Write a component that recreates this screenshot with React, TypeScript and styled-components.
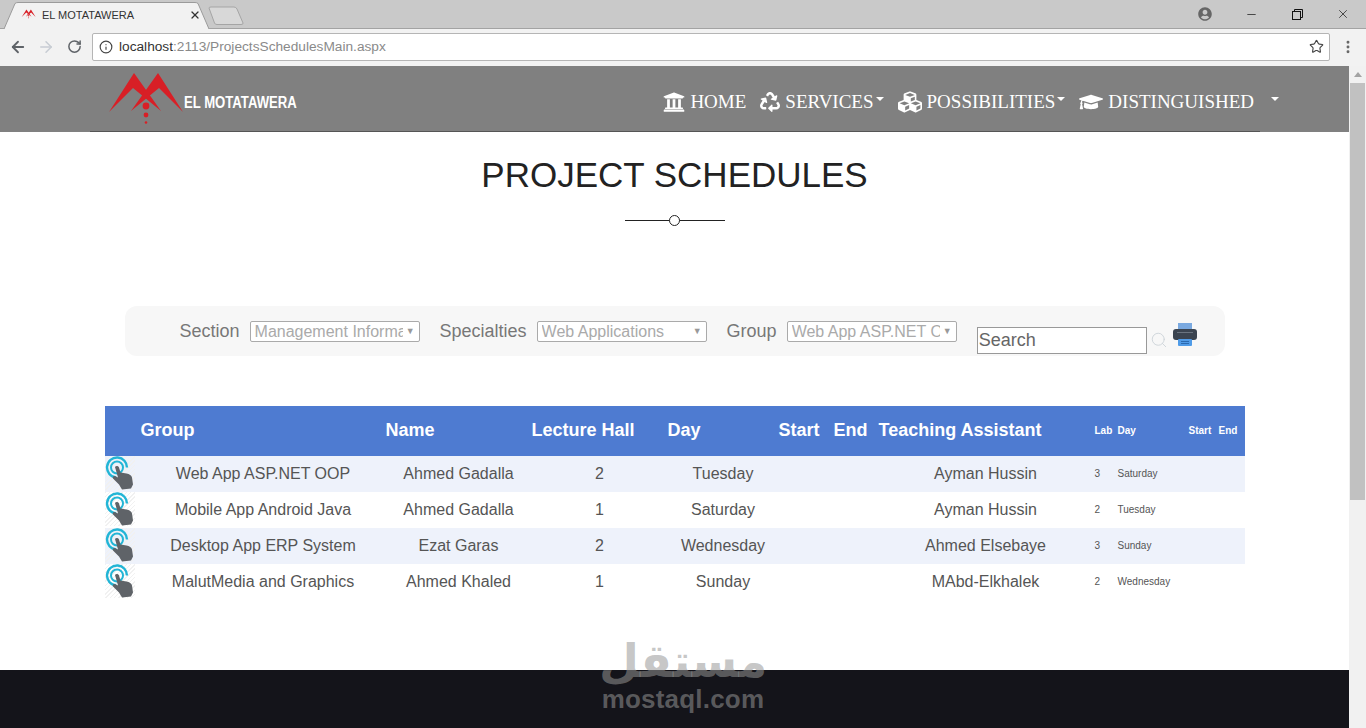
import type { FC } from "react";
import styled, { createGlobalStyle } from "styled-components";
import {
  ArrowLeft,
  ArrowRight,
  EllipsisVertical,
  Info,
  Minus,
  RotateCw,
  Search,
  Star,
  X,
} from "lucide-react";
import { FaCubes, FaGraduationCap, FaRecycle, FaUniversity, FaUserCircle } from "react-icons/fa";

const rows = [
  { group: "Web App ASP.NET OOP", name: "Ahmed Gadalla", hall: "2", day: "Tuesday", ta: "Ayman Hussin", lab: "3", labDay: "Saturday" },
  { group: "Mobile App Android Java", name: "Ahmed Gadalla", hall: "1", day: "Saturday", ta: "Ayman Hussin", lab: "2", labDay: "Tuesday" },
  { group: "Desktop App ERP System", name: "Ezat Garas", hall: "2", day: "Wednesday", ta: "Ahmed Elsebaye", lab: "3", labDay: "Sunday" },
  { group: "MalutMedia and Graphics", name: "Ahmed Khaled", hall: "1", day: "Sunday", ta: "MAbd-Elkhalek", lab: "2", labDay: "Wednesday" },
];

const columns = [36, 245, 146, 136, 111, 55, 45, 216, 23, 71, 30, 26];

const LogoMark: FC<{ size: number }> = ({ size }) => (
  <svg width={size} height={(size * 56) / 80} viewBox="105 70 80 56">
    <polygon points="109,112 134,73 161,111 133,88" fill="#d81f26" />
    <polygon points="183,112 158,73 131,111 159,88" fill="#d81f26" />
    <circle cx="146" cy="106" r="3.4" fill="#d81f26" />
    <circle cx="146" cy="115" r="2.4" fill="#d81f26" />
    <circle cx="146" cy="122.5" r="1.3" fill="#d81f26" />
  </svg>
);

const TapIcon: FC = () => (
  <svg width="30" height="34" viewBox="0 0 30 34">
    <circle cx="12" cy="11.500" r="10" fill="none" stroke="#22b5d6" strokeWidth="2.4" strokeDasharray="46 17" transform="rotate(95 12 11.500)" />
    <circle cx="12" cy="11.500" r="6" fill="none" stroke="#22b5d6" strokeWidth="2" />
    <path
      d="M10 11c1-1.500 3.500-1 4 .5l1.500 5 6 1c3 .5 5 2 5.500 4l1 7-2 4-9 1-3-5-6-6c-1-2 1-3.500 3-2l2 1z"
      fill="#5f6368"
    />
  </svg>
);

const PrinterIcon: FC = () => (
  <svg width="24" height="23" viewBox="0 0 24 23">
    <rect x="5" y="0" width="14" height="7" fill="#7aa9e0" />
    <rect x="0" y="6" width="24" height="11" rx="3" fill="#3b4450" />
    <rect x="4" y="9" width="16" height="1" fill="#6b7480" />
    <rect x="5" y="16" width="14" height="7" rx="1" fill="#4f9be8" />
    <rect x="8" y="18" width="8" height="1" fill="#2a69b0" />
    <rect x="8" y="20" width="8" height="1" fill="#2a69b0" />
  </svg>
);

const App: FC = () => (
  <>
    <GlobalStyle />
    <Window>
      <TabStrip>
        <ActiveTab>
          <TabShape width="205" height="27" viewBox="0 0 205 27">
            <path d="M0 27 L11 1.500 Q12 .5 14 .5 L191 .5 Q193 .5 194 1.500 L205 27" fill="#f2f2f2" stroke="#9b9b9b" />
          </TabShape>
          <Favicon>
            <LogoMark size={15} />
          </Favicon>
          <TabTitle>EL MOTATAWERA</TabTitle>
          <TabClose>
            <X size={12} strokeWidth={2.4} />
          </TabClose>
        </ActiveTab>
        <NewTab width="36" height="20" viewBox="0 0 36 20">
          <path d="M1 2 Q1 1 3 1 L26 1 Q28 1 29 3 L35 17 Q35.500 18.500 33 18.500 L9 18.500 Q7 18.500 6.500 17z" fill="#d8d8d8" stroke="#a5a5a5" />
        </NewTab>
        <WindowControls>
          <ProfileButton>
            <FaUserCircle size={14} />
          </ProfileButton>
          <WindowButton>
            <Minus size={13} strokeWidth={1.3} />
          </WindowButton>
          <WindowButton>
            <svg width="11" height="11" viewBox="0 0 11 11" fill="none" stroke="#111" strokeWidth="1">
              <rect x=".5" y="2.500" width="8" height="8" />
              <path d="M2.500 2.500V.5h8v8H8.500" />
            </svg>
          </WindowButton>
          <WindowButton>
            <X size={14} strokeWidth={1.2} />
          </WindowButton>
        </WindowControls>
      </TabStrip>

      <Toolbar>
        <ToolButton>
          <ArrowLeft size={18} strokeWidth={2.4} color="#5f6368" />
        </ToolButton>
        <ToolButton>
          <ArrowRight size={18} strokeWidth={2} color="#c7ccd3" />
        </ToolButton>
        <ToolButton>
          <RotateCw size={15} strokeWidth={2.4} color="#5f6368" />
        </ToolButton>
        <Omnibox>
          <Info size={14} strokeWidth={2} color="#444" />
          <UrlHost>localhost</UrlHost>
          <UrlPath>:2113/ProjectsSchedulesMain.aspx</UrlPath>
          <OmniStar>
            <Star size={15} strokeWidth={1.8} color="#444" />
          </OmniStar>
        </Omnibox>
        <MenuButton>
          <EllipsisVertical size={16} strokeWidth={2.4} color="#666" />
        </MenuButton>
      </Toolbar>

      <Viewport>
        <Page>
          <Nav>
            <NavRow>
              <Brand>
                <LogoMark size={80} />
                <BrandName>EL MOTATAWERA</BrandName>
              </Brand>
              <NavLinks>
                <NavLink>
                  <FaUniversity size={22} />
                  HOME
                </NavLink>
                <NavLink>
                  <FaRecycle size={20} />
                  SERVICES
                  <Caret />
                </NavLink>
                <NavLink>
                  <FaCubes size={24} />
                  POSSIBILITIES
                  <Caret />
                </NavLink>
                <NavLink>
                  <FaGraduationCap size={24} />
                  DISTINGUISHED
                  <WideCaret />
                </NavLink>
              </NavLinks>
            </NavRow>
            <NavRule />
          </Nav>

          <Main>
            <Title>PROJECT SCHEDULES</Title>
            <Divider>
              <DividerDot />
            </Divider>

            <FilterBar>
              <FilterLabel>Section</FilterLabel>
              <SelectBox>
                <SelectText>Management Information</SelectText>
                <SelectArrow>▼</SelectArrow>
              </SelectBox>
              <FilterLabel>Specialties</FilterLabel>
              <SelectBox>
                <SelectText>Web Applications</SelectText>
                <SelectArrow>▼</SelectArrow>
              </SelectBox>
              <FilterLabel>Group</FilterLabel>
              <SelectBox>
                <SelectText>Web App ASP.NET OOP</SelectText>
                <SelectArrow>▼</SelectArrow>
              </SelectBox>
              <SearchInput readOnly value="Search" />
              <SearchButton>
                <Search size={18} strokeWidth={1.2} color="#ccd3d8" />
              </SearchButton>
              <PrintButton>
                <PrinterIcon />
              </PrintButton>
            </FilterBar>

            <ScheduleTable>
              <colgroup>
                {columns.map((width, index) => (
                  <col key={index} style={{ width }} />
                ))}
              </colgroup>
              <thead>
                <tr>
                  <HeadCell />
                  <HeadCell>Group</HeadCell>
                  <HeadCell>Name</HeadCell>
                  <HeadCell>Lecture Hall</HeadCell>
                  <HeadCell>Day</HeadCell>
                  <HeadCell>Start</HeadCell>
                  <HeadCell>End</HeadCell>
                  <HeadCell>Teaching Assistant</HeadCell>
                  <SmallHeadCell>Lab</SmallHeadCell>
                  <SmallHeadCell>Day</SmallHeadCell>
                  <SmallHeadCell>Start</SmallHeadCell>
                  <SmallHeadCell>End</SmallHeadCell>
                </tr>
              </thead>
              <tbody>
                {rows.map((row) => (
                  <Row key={row.group}>
                    <IconCell>
                      <TapIcon />
                    </IconCell>
                    <Cell>{row.group}</Cell>
                    <Cell>{row.name}</Cell>
                    <Cell>{row.hall}</Cell>
                    <Cell>{row.day}</Cell>
                    <Cell />
                    <Cell />
                    <AssistantCell>{row.ta}</AssistantCell>
                    <SmallCell>{row.lab}</SmallCell>
                    <SmallCell>{row.labDay}</SmallCell>
                    <SmallCell />
                    <SmallCell />
                  </Row>
                ))}
              </tbody>
            </ScheduleTable>
          </Main>

          <Footer />

          <Watermark>
            <WatermarkArabic>مستقل</WatermarkArabic>
            <WatermarkLatin>mostaql.com</WatermarkLatin>
          </Watermark>
        </Page>

        <Scrollbar>
          <ScrollArrow />
          <ScrollThumb />
        </Scrollbar>
      </Viewport>
    </Window>
  </>
);

export default App;

const GlobalStyle = createGlobalStyle`
  html, body {
    margin: 0;
    padding: 0;
    overflow: hidden;
    background: #fff;
    font-family: "Liberation Sans", Arial, sans-serif;
  }
`;

const Window = styled.div`
  width: 1366px;
  height: 728px;
  display: flex;
  flex-direction: column;
  overflow: hidden;
`;

const TabStrip = styled.div`
  height: 28px;
  flex: none;
  display: flex;
  align-items: flex-end;
  padding-left: 4px;
  background: #c9c9c9;
  border-bottom: 1px solid #a3a3a3;
  box-sizing: content-box;
`;

const ActiveTab = styled.div`
  position: relative;
  width: 205px;
  height: 27px;
  margin-bottom: -1px;
  display: flex;
  align-items: center;
  padding: 0 0 2px 17px;
  box-sizing: border-box;
`;

const TabShape = styled.svg`
  position: absolute;
  left: 0;
  top: 0;
`;

const Favicon = styled.span`
  position: relative;
  display: flex;
  width: 21px;
`;

const TabTitle = styled.span`
  position: relative;
  font-size: 11px;
  color: #333;
  width: 147px;
`;

const TabClose = styled.span`
  position: relative;
  display: flex;
  color: #333;
`;

const NewTab = styled.svg`
  margin: 0 0 2px -1px;
`;

const WindowControls = styled.div`
  margin-left: auto;
  height: 28px;
  display: flex;
  align-items: center;
`;

const ProfileButton = styled.span`
  display: flex;
  color: #666;
  margin-right: 16px;
`;

const WindowButton = styled.span`
  width: 46px;
  display: flex;
  justify-content: center;
  color: #111;
`;

const Toolbar = styled.div`
  height: 37px;
  flex: none;
  display: flex;
  align-items: center;
  padding: 0 0 2px 4px;
  box-sizing: border-box;
  background: #f2f2f2;
`;

const ToolButton = styled.span`
  width: 28px;
  display: flex;
  justify-content: center;
`;

const Omnibox = styled.div`
  width: 1238px;
  height: 28px;
  margin-left: 4px;
  display: flex;
  align-items: center;
  padding: 0 5px 0 6px;
  box-sizing: border-box;
  background: #fff;
  border: 1px solid #b5b5b5;
  border-radius: 2px;
  font-size: 13.7px;
`;

const UrlHost = styled.span`
  margin-left: 6px;
  color: #333;
`;

const UrlPath = styled.span`
  color: #8a8a8a;
`;

const OmniStar = styled.span`
  margin-left: auto;
  display: flex;
`;

const MenuButton = styled.span`
  width: 36px;
  display: flex;
  justify-content: center;
`;

const Viewport = styled.div`
  flex: 1;
  min-height: 0;
  display: flex;
`;

const Page = styled.div`
  position: relative;
  flex: 1;
  min-width: 0;
  display: flex;
  flex-direction: column;
`;

const Nav = styled.div`
  height: 66px;
  flex: none;
  display: flex;
  flex-direction: column;
  background: #808080;
`;

const NavRow = styled.div`
  flex: 1;
  display: flex;
  align-items: center;
  justify-content: space-between;
  padding: 0 70px 0 105px;
`;

const NavRule = styled.div`
  height: 1px;
  margin: 0 89px 0 90px;
  background: #555;
`;

const Brand = styled.div`
  display: flex;
  align-items: center;
  margin-top: -2px;
`;

const BrandName = styled.span`
  margin: 11px 0 0 -1px;
  font-size: 16px;
  font-weight: 700;
  color: #fff;
  white-space: nowrap;
  transform: scaleX(0.82);
  transform-origin: left center;
  width: 113px;
`;

const NavLinks = styled.div`
  display: flex;
  align-items: center;
  gap: 14px;
  padding-top: 7px;
`;

const NavLink = styled.a`
  display: flex;
  align-items: center;
  gap: 5px;
  font-family: "Liberation Serif", "Times New Roman", serif;
  font-size: 19px;
  color: #fff;
`;

const Caret = styled.span`
  width: 0;
  height: 0;
  margin: -6px 0 0 -3px;
  border-top: 4px solid #fff;
  border-left: 4px solid transparent;
  border-right: 4px solid transparent;
`;

const WideCaret = styled(Caret)`
  margin-left: 12px;
`;

const Main = styled.main`
  flex: 1;
  display: flex;
  flex-direction: column;
  align-items: center;
  min-height: 0;
`;

const Title = styled.h1`
  margin: 22px 0 0;
  font-size: 35px;
  line-height: 41px;
  font-weight: 400;
  color: #222;
`;

const Divider = styled.div`
  position: relative;
  width: 100px;
  height: 1px;
  margin-top: 25px;
  background: #222;
`;

const DividerDot = styled.span`
  position: absolute;
  left: 44px;
  top: -5px;
  width: 9px;
  height: 9px;
  border: 1px solid #222;
  border-radius: 50%;
  background: #fff;
`;

const FilterBar = styled.div`
  width: 1100px;
  height: 50px;
  margin-top: 85px;
  display: flex;
  align-items: flex-start;
  padding: 15px 0 0 55px;
  box-sizing: border-box;
  background: #f7f7f7;
  border-radius: 12px;
`;

const FilterLabel = styled.span`
  margin-right: 10px;
  font-size: 18px;
  line-height: 21px;
  color: #777;
`;

const SelectBox = styled.div`
  width: 170px;
  height: 21px;
  margin-right: 20px;
  display: flex;
  align-items: center;
  padding: 0 4px;
  box-sizing: border-box;
  background: #fff;
  border: 1px solid #aaa;
  border-radius: 2px;
  font-size: 16px;
  color: #aaa;
`;

const SelectText = styled.span`
  flex: 1;
  min-width: 0;
  overflow: hidden;
  white-space: nowrap;
`;

const SelectArrow = styled.span`
  margin: -2px 0 0 3px;
  font-size: 9px;
  color: #999;
`;

const SearchInput = styled.input`
  width: 170px;
  height: 27px;
  margin-top: 6px;
  padding: 1px;
  box-sizing: border-box;
  background: #fff;
  border: 1px solid #999;
  border-radius: 0;
  outline: none;
  font-family: inherit;
  font-size: 18px;
  color: #666;
`;

const SearchButton = styled.span`
  display: flex;
  margin: 10px 0 0 3px;
`;

const PrintButton = styled.span`
  display: flex;
  margin: 2px 0 0 5px;
`;

const ScheduleTable = styled.table`
  width: 1140px;
  margin-top: 50px;
  table-layout: fixed;
  border-collapse: collapse;
`;

const HeadCell = styled.th`
  height: 50px;
  padding: 0 0 2px;
  box-sizing: border-box;
  background: #4e7bd1;
  font-size: 18px;
  font-weight: 700;
  color: #fff;
  text-align: left;
  white-space: nowrap;
`;

const SmallHeadCell = styled(HeadCell)`
  font-size: 10px;
`;

const Row = styled.tr`
  &:nth-child(odd) {
    background: #eef2fb;
  }
`;

const Cell = styled.td`
  height: 36px;
  padding: 0;
  font-size: 16px;
  color: #555;
  text-align: center;
  white-space: nowrap;
`;

const AssistantCell = styled(Cell)`
  padding-right: 2px;
`;

const SmallCell = styled(Cell)`
  padding-bottom: 2px;
  box-sizing: border-box;
  font-size: 10px;
  text-align: left;
`;

const IconCell = styled.td`
  height: 36px;
  padding: 0;
  line-height: 0;
  vertical-align: top;

  svg {
    background: repeating-linear-gradient(135deg, #f1f1f1 0 1px, transparent 1px 3px);
  }
`;

const Footer = styled.footer`
  height: 58px;
  flex: none;
  background: #14141a;
`;

const Watermark = styled.div`
  position: absolute;
  left: 600px;
  top: 570px;
  width: 166px;
  display: flex;
  flex-direction: column;
  align-items: center;
  pointer-events: none;
  color: rgba(150, 150, 150, 0.55);
`;

const WatermarkArabic = styled.span`
  height: 50px;
  font-family: "DejaVu Sans", sans-serif;
  font-size: 46px;
  line-height: 50px;
  font-weight: 700;
`;

const WatermarkLatin = styled.span`
  font-size: 26px;
  line-height: 26px;
  font-weight: 700;
  letter-spacing: 0.2px;
`;

const Scrollbar = styled.div`
  width: 17px;
  flex: none;
  display: flex;
  flex-direction: column;
  align-items: center;
  background: #f1f1f1;
`;

const ScrollArrow = styled.span`
  width: 0;
  height: 0;
  margin: 6px 0 6px;
  border-bottom: 5px solid #a3a3a3;
  border-left: 4px solid transparent;
  border-right: 4px solid transparent;
`;

const ScrollThumb = styled.span`
  width: 15px;
  height: 417px;
  background: #c1c1c1;
`;
